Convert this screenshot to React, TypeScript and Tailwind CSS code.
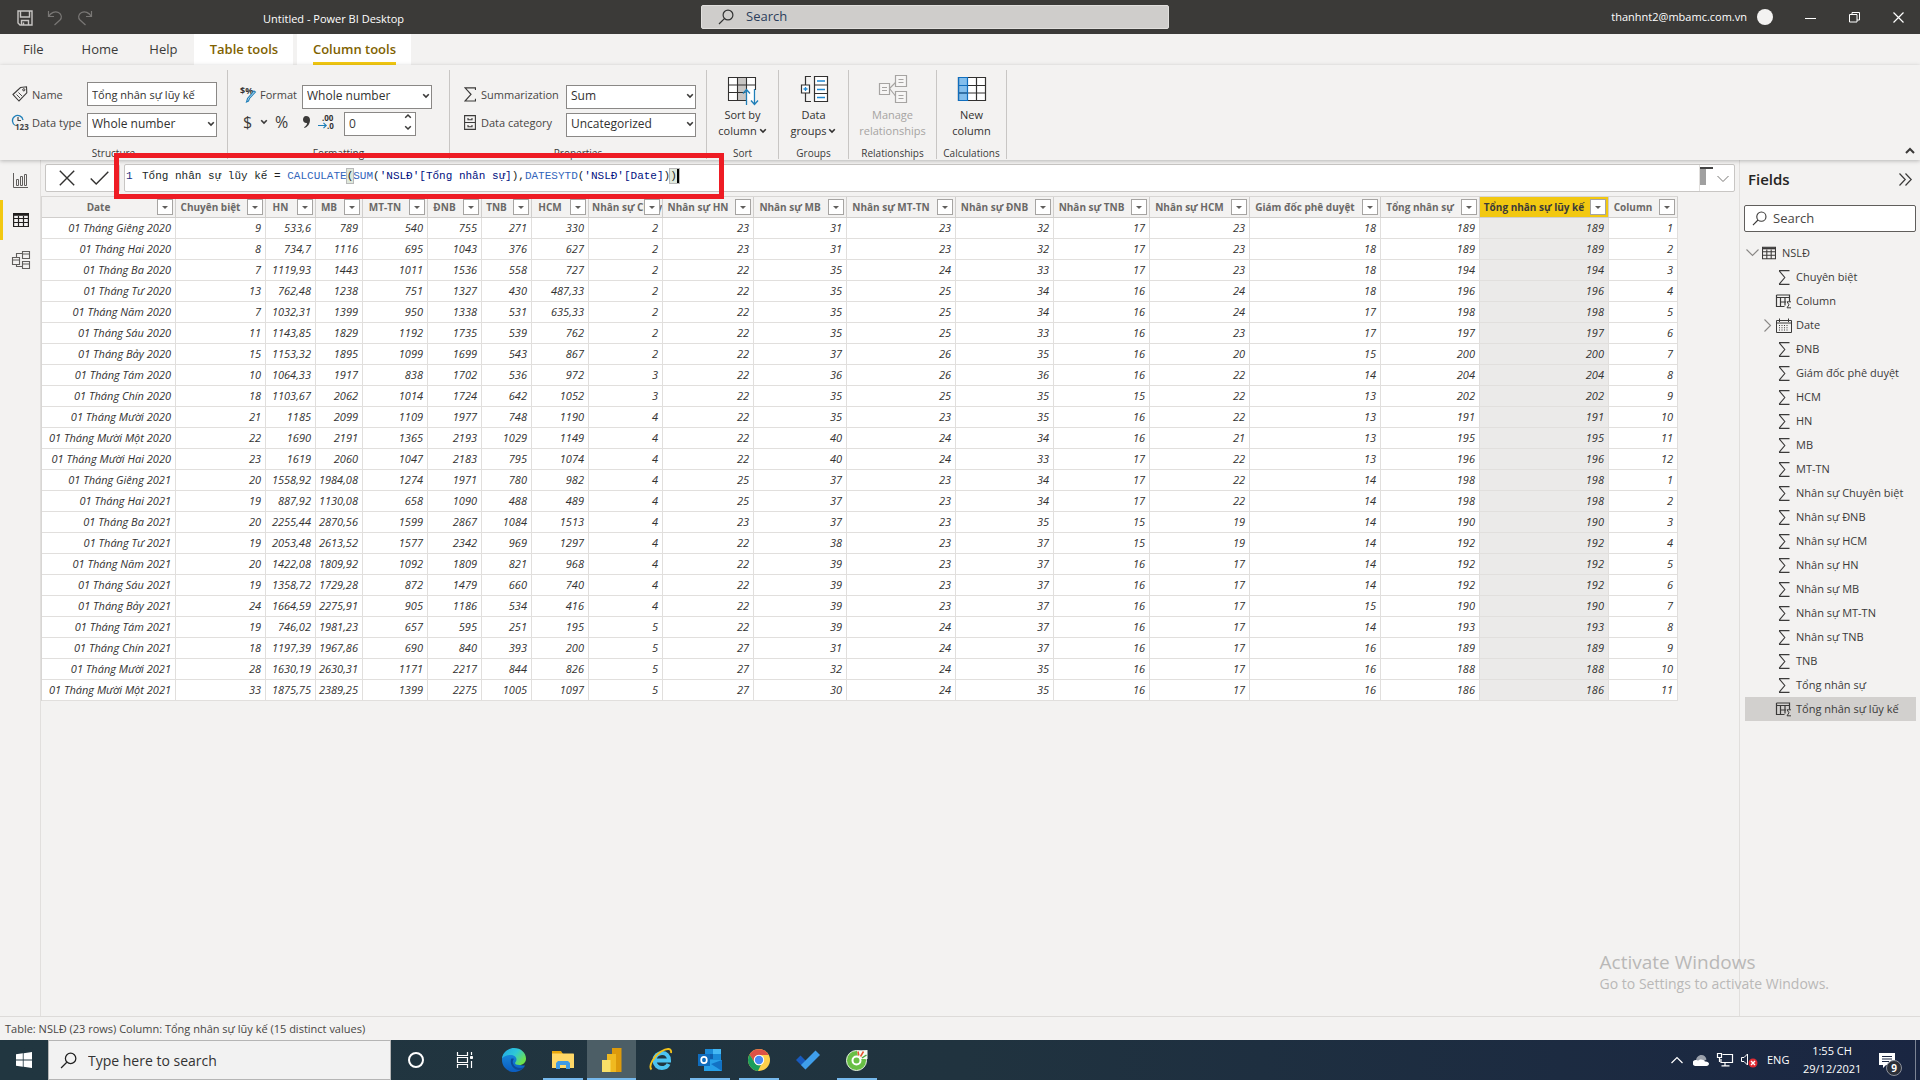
import type { ReactNode } from "react";

const UI = "font-['Open_Sans','Noto_Sans',sans-serif]";

/* ---------- data ---------- */

const columns: { name: string; width: string }[] = [
  { name: "Date", width: "w-[134px]" },
  { name: "Chuyên biệt", width: "w-[90px]" },
  { name: "HN", width: "w-[50px]" },
  { name: "MB", width: "w-[47px]" },
  { name: "MT-TN", width: "w-[65px]" },
  { name: "ĐNB", width: "w-[54px]" },
  { name: "TNB", width: "w-[50px]" },
  { name: "HCM", width: "w-[57px]" },
  { name: "Nhân sự Chuyên biệt", width: "w-[74px]" },
  { name: "Nhân sự HN", width: "w-[91px]" },
  { name: "Nhân sự MB", width: "w-[93px]" },
  { name: "Nhân sự MT-TN", width: "w-[109px]" },
  { name: "Nhân sự ĐNB", width: "w-[98px]" },
  { name: "Nhân sự TNB", width: "w-[96px]" },
  { name: "Nhân sự HCM", width: "w-[100px]" },
  { name: "Giám đốc phê duyệt", width: "w-[131px]" },
  { name: "Tổng nhân sự", width: "w-[99px]" },
  { name: "Tổng nhân sự lũy kế", width: "w-[129px]" },
  { name: "Column", width: "w-[69px]" },
];
const CLIPPED = 8;
const SELECTED = 17;

const rows: string[][] = [
  "01 Tháng Giêng 2020|9|533,6|789|540|755|271|330|2|23|31|23|32|17|23|18|189|189|1",
  "01 Tháng Hai 2020|8|734,7|1116|695|1043|376|627|2|23|31|23|32|17|23|18|189|189|2",
  "01 Tháng Ba 2020|7|1119,93|1443|1011|1536|558|727|2|22|35|24|33|17|23|18|194|194|3",
  "01 Tháng Tư 2020|13|762,48|1238|751|1327|430|487,33|2|22|35|25|34|16|24|18|196|196|4",
  "01 Tháng Năm 2020|7|1032,31|1399|950|1338|531|635,33|2|22|35|25|34|16|24|17|198|198|5",
  "01 Tháng Sáu 2020|11|1143,85|1829|1192|1735|539|762|2|22|35|25|33|16|23|17|197|197|6",
  "01 Tháng Bảy 2020|15|1153,32|1895|1099|1699|543|867|2|22|37|26|35|16|20|15|200|200|7",
  "01 Tháng Tám 2020|10|1064,33|1917|838|1702|536|972|3|22|36|26|36|16|22|14|204|204|8",
  "01 Tháng Chín 2020|18|1103,67|2062|1014|1724|642|1052|3|22|35|25|35|15|22|13|202|202|9",
  "01 Tháng Mười 2020|21|1185|2099|1109|1977|748|1190|4|22|35|23|35|16|22|13|191|191|10",
  "01 Tháng Mười Một 2020|22|1690|2191|1365|2193|1029|1149|4|22|40|24|34|16|21|13|195|195|11",
  "01 Tháng Mười Hai 2020|23|1619|2060|1047|2183|795|1074|4|22|40|24|33|17|22|13|196|196|12",
  "01 Tháng Giêng 2021|20|1558,92|1984,08|1274|1971|780|982|4|25|37|23|34|17|22|14|198|198|1",
  "01 Tháng Hai 2021|19|887,92|1130,08|658|1090|488|489|4|25|37|23|34|17|22|14|198|198|2",
  "01 Tháng Ba 2021|20|2255,44|2870,56|1599|2867|1084|1513|4|23|37|23|35|15|19|14|190|190|3",
  "01 Tháng Tư 2021|19|2053,48|2613,52|1577|2342|969|1297|4|22|38|23|37|15|19|14|192|192|4",
  "01 Tháng Năm 2021|20|1422,08|1809,92|1092|1809|821|968|4|22|39|23|37|16|17|14|192|192|5",
  "01 Tháng Sáu 2021|19|1358,72|1729,28|872|1479|660|740|4|22|39|23|37|16|17|14|192|192|6",
  "01 Tháng Bảy 2021|24|1664,59|2275,91|905|1186|534|416|4|22|39|23|37|16|17|15|190|190|7",
  "01 Tháng Tám 2021|19|746,02|1981,23|657|595|251|195|5|22|39|24|37|16|17|14|193|193|8",
  "01 Tháng Chín 2021|18|1197,39|1967,86|690|840|393|200|5|27|31|24|37|16|17|16|189|189|9",
  "01 Tháng Mười 2021|28|1630,19|2630,31|1171|2217|844|826|5|27|32|24|35|16|17|16|188|188|10",
  "01 Tháng Mười Một 2021|33|1875,75|2389,25|1399|2275|1005|1097|5|27|30|24|35|16|17|16|186|186|11",
].map((r) => r.split("|"));

type FieldKind = "sum" | "calc" | "date";
const fields: { name: string; kind: FieldKind }[] = [
  { name: "Chuyên biệt", kind: "sum" },
  { name: "Column", kind: "calc" },
  { name: "Date", kind: "date" },
  { name: "ĐNB", kind: "sum" },
  { name: "Giám đốc phê duyệt", kind: "sum" },
  { name: "HCM", kind: "sum" },
  { name: "HN", kind: "sum" },
  { name: "MB", kind: "sum" },
  { name: "MT-TN", kind: "sum" },
  { name: "Nhân sự Chuyên biệt", kind: "sum" },
  { name: "Nhân sự ĐNB", kind: "sum" },
  { name: "Nhân sự HCM", kind: "sum" },
  { name: "Nhân sự HN", kind: "sum" },
  { name: "Nhân sự MB", kind: "sum" },
  { name: "Nhân sự MT-TN", kind: "sum" },
  { name: "Nhân sự TNB", kind: "sum" },
  { name: "TNB", kind: "sum" },
  { name: "Tổng nhân sự", kind: "sum" },
  { name: "Tổng nhân sự lũy kế", kind: "calc" },
];

/* ---------- icons ---------- */

function Svg({ w, h, children, className = "" }: { w: number; h: number; children: ReactNode; className?: string }) {
  return (
    <svg
      width={w}
      height={h}
      viewBox={`0 0 ${w} ${h}`}
      fill="none"
      stroke="currentColor"
      className={`shrink-0 overflow-visible ${className}`}
      aria-hidden="true"
    >
      {children}
    </svg>
  );
}

const SmallChevron = ({ className = "" }: { className?: string }) => (
  <Svg w={8} h={6} className={className}>
    <path d="M1.2 1.2 4 4l2.8-2.8" strokeWidth="1.6" />
  </Svg>
);

const SearchIcon = ({ size = 16 }: { size?: number }) => (
  <svg width={size} height={size} viewBox="0 0 16 16" fill="none" stroke="currentColor" strokeWidth="1.2" className="shrink-0" aria-hidden="true">
    <circle cx="10" cy="6" r="4.9" />
    <path d="M6.4 9.6 1 15" />
  </svg>
);

const SaveIcon = () => (
  <Svg w={16} h={16}>
    <path d="M1 1h14v14H3l-2-2zM3.5 1v6h9V1M4.5 15v-4.5h7V15M6.5 12.500v2.500" strokeWidth="1.400" />
  </Svg>
);

const UndoIcon = () => (
  <Svg w={16} h={16}>
    <path d="M1.500 1v5.500H7M1.800 6.200C4 2.500 8 .8 11.500 2.500c3.500 2 3.500 5.500 1.500 7.500L7.500 15" strokeWidth="1.200" />
  </Svg>
);

const SigmaIcon = ({ w = 12, h = 15 }: { w?: number; h?: number }) => (
  <svg width={w} height={h} viewBox="0 0 12 15" fill="none" stroke="currentColor" strokeWidth="1.2" className="shrink-0" aria-hidden="true">
    <path d="M11.500 3V.8H1l6 6.500L1 14h10.500v-2.200" />
  </svg>
);

const ThinSigma = () => (
  <Svg w={12} h={15}>
    <path d="M1 .6h10.500M1 14.400h10.500M1.200.8l5.600 6.700-5.600 6.700" strokeWidth="1.100" />
  </Svg>
);

const TableIcon = ({ size = 16 }: { size?: number }) => (
  <svg width={size} height={size} viewBox="0 0 16 16" fill="none" stroke="currentColor" className="shrink-0" aria-hidden="true">
    <path d="M.6 1.500h14.800v13H.6zM.6 6.500h14.800M.6 10.500h14.800M5.500 4v10.500M10.500 4v10.500" strokeWidth="1.200" />
    <path d="M.6 2.700h14.800" strokeWidth="2.200" />
  </svg>
);

const CalcColumnIcon = () => (
  <Svg w={16} h={15}>
    <path d="M.5 1h13v6.500M.5 1v11.500h8M.5 3.500h13M4.500 3.500v9M9 3.500v8M4.500 8H10" strokeWidth="1.200" />
    <path d="M15 7.800h-4l2 3-2 3h4" strokeWidth="1" />
  </Svg>
);

const CalendarIcon = () => (
  <Svg w={16} h={15}>
    <path d="M.5 2.500h15v12H.5zM.5 5h15M3.500.5V4M12.500.5V4" strokeWidth="1" />
    <path d="M3 7.500h10M3 9.800h10M3 12h10" strokeWidth="1.100" strokeDasharray="1 1.500" />
  </Svg>
);

const TagIcon = () => (
  <Svg w={16} h={16}>
    <path d="M1 8.500 8.500 1.500 14.500.8l.3 6L7 15z" strokeWidth="1.100" />
    <circle cx="11.800" cy="3.800" r="1.100" />
    <path d="m4.500 8.500 3.500 3.500M6.500 6.500l3.500 3.500" strokeWidth=".9" />
  </Svg>
);

const DataTypeIcon = () => (
  <Svg w={18} h={17}>
    <path d="M3.500 11.500A5.300 5.300 0 1 1 11 6" stroke="#1f7fb8" strokeWidth="1.300" />
    <path d="M6 3v3.500h3" strokeWidth="1.100" />
    <text x="3" y="16" fontSize="8" fontWeight="700" fill="#444" stroke="none" fontFamily="Open Sans">
      123
    </text>
  </Svg>
);

const FormatIcon = () => (
  <Svg w={17} h={17}>
    <text x="0" y="8" fontSize="9" fontWeight="700" fill="#333" stroke="none" fontFamily="Open Sans">
      $%
    </text>
    <path d="m15.500 6-6 6.500-1 2.500-2 1 1-3.500L14 5z" stroke="#1f7fb8" strokeWidth="1.100" fill="#cfe6f5" />
  </Svg>
);

const DecimalIcon = () => (
  <Svg w={17} h={16}>
    <text x="4" y="7" fontSize="8" fontWeight="700" fill="#333" stroke="none" fontFamily="Open Sans">
      .00
    </text>
    <text x="9" y="15" fontSize="8" fontWeight="700" fill="#333" stroke="none" fontFamily="Open Sans">
      .0
    </text>
    <path d="M0 11.500h8M5.500 8.800l2.700 2.700-2.700 2.700" stroke="#1f7fb8" strokeWidth="1.200" />
  </Svg>
);

const CabinetIcon = () => (
  <Svg w={12} h={15}>
    <path d="M.6.600h10.800v13.800H.6zM.6 7.500h10.800M4 3v1.800h4V3M4 10v1.800h4V10" strokeWidth="1.100" />
  </Svg>
);

const SortIcon = () => (
  <Svg w={32} h={32}>
    <path d="M1.500 4.500h27v23h-27z" fill="#fff" stroke="none" />
    <path d="M10.500 4.500h9v23h-9z" fill="#c8c6c4" stroke="none" />
    <path d="M19 27.500H1.500v-23h27V17M1.500 12h27M1.500 19.500h17M10.500 4.500v23M19.500 4.500V16" strokeWidth="1.100" />
    <path d="M19.500 32V17M16 20.500l3.500-4 3.500 4M27.500 16v15M24 27.500l3.500 4 3.500-4" stroke="#1f7fb8" strokeWidth="1.300" />
  </Svg>
);

const GroupsIcon = () => (
  <Svg w={30} h={30}>
    <path d="M15.500 2.500h13v25h-13z" fill="#fff" strokeWidth="1.200" />
    <path d="M15.500 11h13M15.500 19.500h13M12 2.500H6.500V11M6.500 19v8.500H12" strokeWidth="1.200" />
    <path d="M18 7h8M18 15.500h8M18 23.500h8" stroke="#1e88d2" strokeWidth="1.300" />
    <path d="M2.500 11h8v8h-8z" fill="#fff" strokeWidth="1.200" />
    <path d="M4.500 15h4M6.500 13v4" stroke="#1e88d2" strokeWidth="1.300" />
  </Svg>
);

const RelationsIcon = () => (
  <Svg w={30} h={30}>
    <path d="M11.500 14.500l6-6M11.500 14.500l6 7.500" strokeWidth="1.200" />
    <path d="M1.500 9.500h10v11h-10zM17.500 1.500h11v11h-11zM17.500 17.500h11v11h-11z" fill="#f7f6f5" strokeWidth="1.200" />
    <path d="M4 13.500h5M4 16.500h5M20.500 5.500h5M20.500 8.500h5M20.500 21.500h5M20.500 24.500h5" strokeWidth="1" />
  </Svg>
);

const NewColumnIcon = () => (
  <Svg w={30} h={28}>
    <path d="M1.500 2.500h27v23h-27z" fill="#fff" stroke="none" />
    <path d="M1.500 2.500h9v23h-9z" fill="#83beec" stroke="none" />
    <path d="M1.500 2.500h27v23h-27zM1.500 10.500h27M1.500 18h27M19.500 2.500v23" strokeWidth="1.200" />
    <path d="M10.500 2.500v23h-9v-23zM1.500 10.500h9M1.500 18h9" stroke="#106ebe" strokeWidth="1.200" />
  </Svg>
);

/* ---------- shell ---------- */

function TitleBar() {
  return (
    <header className="grid h-[34px] grid-cols-[701fr_468fr_751fr] items-center bg-[#3b3a38] text-[12px] text-white">
      <div className="flex items-center">
        <div className="flex items-center gap-[14px] pt-[2px] pl-[17px]">
          <button aria-label="Save" className="text-[#c8c6c4]"><SaveIcon /></button>
          <button aria-label="Undo" className="text-[#797775]"><UndoIcon /></button>
          <button aria-label="Redo" className="-scale-x-100 text-[#797775]"><UndoIcon /></button>
        </div>
        <h1 className="pt-1 pl-[170px] text-[11px]">Untitled - Power BI Desktop</h1>
      </div>
      <label className="flex h-6 items-center gap-3 rounded-[2px] border border-[#e1dfdd] bg-[#cfcdcb] px-4 text-[#333]">
        <SearchIcon />
        <input aria-label="Search" placeholder="Search" className="min-w-0 flex-1 bg-transparent text-[13px] outline-none placeholder:text-[#2c3e5c]" />
      </label>
      <div className="flex items-center justify-end">
        <span className="pt-px text-[11px]">thanhnt2@mbamc.com.vn</span>
        <span className="mr-[15px] ml-[10px] size-4 rounded-full bg-[#f3f2f1]" />
        <button aria-label="Minimize" className="flex w-11 justify-center"><Svg w={11} h={11}><path d="M0 6.500h11" /></Svg></button>
        <button aria-label="Restore" className="flex w-11 justify-center"><Svg w={11} h={11}><path d="M.5 2.500h7.500v7.500H.5zM3 2.500V.5h7.500V8H8" /></Svg></button>
        <button aria-label="Close" className="flex w-11 justify-center"><Svg w={11} h={11}><path d="m.5.500 10 10M10.500.5l-10 10" strokeWidth="1.200" /></Svg></button>
      </div>
    </header>
  );
}

function Tabs() {
  return (
    <nav className="flex h-[31px] text-[13px] text-[#3b3a39]">
      <button className="pt-px pr-[18px] pl-[23px]">File</button>
      <button className="px-5 pt-px">Home</button>
      <button className="px-[11px] pt-px">Help</button>
      <button className="ml-[6px] w-[99px] bg-white pt-px font-semibold text-[#806200]">Table tools</button>
      <button className="ml-1 flex w-[114px] justify-center bg-white font-semibold text-[#806200]">
        <span className="flex h-full items-center border-b-[3px] border-[#f2c811] pt-1">Column tools</span>
      </button>
    </nav>
  );
}

function Select({ label, value, width }: { label: string; value: string; width: string }) {
  return (
    <span className={`relative block h-6 ${width}`}>
      <select id={label} defaultValue={value} className="h-6 w-full appearance-none border border-[#8a8886] bg-white pr-4 pb-[2px] pl-1 text-[12px] leading-5 text-[#323130]">
        <option>{value}</option>
      </select>
      <SmallChevron className="pointer-events-none absolute top-[11px] right-[2px]" />
    </span>
  );
}

function Group({ title, width, children }: { title: string; width: string; children: ReactNode }) {
  return (
    <section className={`flex h-[89px] shrink-0 flex-col justify-between border-r border-[#c8c6c4] ${width}`}>
      {children}
      <h2 className="text-center text-[10px] leading-[12px] text-[#3b3a39]">{title}</h2>
    </section>
  );
}

function BigButton({ icon, lines, menu, disabled }: { icon: ReactNode; lines: [string, string]; menu?: boolean; disabled?: boolean }) {
  return (
    <button disabled={disabled} className={`flex flex-col items-center text-[11px] leading-4 ${disabled ? "text-[#a6a4a2]" : "text-[#323130]"}`}>
      <span className="flex h-[37px] items-center">{icon}</span>
      <span>{lines[0]}</span>
      <span className="flex items-center gap-[2px]">
        {lines[1]}
        {menu && <SmallChevron />}
      </span>
    </button>
  );
}

const labelClass = "pt-[2px] whitespace-nowrap text-[11px] text-[#484644]";

function Ribbon() {
  return (
    <div className="relative z-10 flex h-[95px] items-start bg-[#f3f2f1] pt-[5px] text-[#3b3a39] shadow-[0_1px_4px_rgba(0,0,0,0.25)]">
      <Group title="Structure" width="w-[228px]">
        <div className="grid grid-cols-[20px_55px_130px] items-center gap-y-1 pt-3 pl-3">
          <TagIcon />
          <label htmlFor="name" className={labelClass}>Name</label>
          <input id="name" defaultValue="Tổng nhân sự lũy kế" className="h-6 border border-[#8a8886] bg-white px-1 text-[11px] text-[#323130]" />
          <DataTypeIcon />
          <label htmlFor="Data type" className={labelClass}>Data type</label>
          <Select label="Data type" value="Whole number" width="w-[130px]" />
        </div>
      </Group>
      <Group title="Formatting" width="w-[222px]">
        <div className="flex flex-col gap-1 pt-3 pl-3">
          <div className="grid grid-cols-[20px_42px_130px] items-center">
            <FormatIcon />
            <label htmlFor="Format" className={labelClass}>Format</label>
            <Select label="Format" value="Whole number" width="w-[130px]" />
          </div>
          <div className="flex h-6 items-center">
            <button aria-label="Currency" className="flex w-[35px] items-center gap-2 pl-[3px] text-[16px] leading-6">
              $<SmallChevron />
            </button>
            <button aria-label="Percentage" className="w-[27px] text-left text-[16px] leading-6">%</button>
            <button aria-label="Thousands separator" className="w-4">
              <Svg w={9} h={14}><path d="M4 1C6.500 1 8 2.600 8 5c0 4-2.500 7-5.500 8l-.4-.8C4 11 5 9.600 5 8 2.500 8.300 1 6.800 1 4.600 1 2.500 2.300 1 4 1z" fill="currentColor" stroke="none" /></Svg>
            </button>
            <button aria-label="Decimal places"><DecimalIcon /></button>
            <span className="relative ml-[9px] block h-6 w-[72px]">
              <input aria-label="Decimals" defaultValue="0" className="h-6 w-full border border-[#8a8886] bg-white px-1 text-[12px]" />
              <Svg w={8} h={18} className="pointer-events-none absolute top-[3px] right-1"><path d="M1.200 4.800 4 2l2.800 2.800M1.200 13.200 4 16l2.800-2.800" strokeWidth="1.500" /></Svg>
            </span>
          </div>
        </div>
      </Group>
      <Group title="Properties" width="w-[257px]">
        <div className="grid grid-cols-[17px_85px_130px] items-center gap-y-1 pt-3 pl-[14px]">
          <SigmaIcon />
          <label htmlFor="Summarization" className={labelClass}>Summarization</label>
          <Select label="Summarization" value="Sum" width="w-[130px]" />
          <CabinetIcon />
          <label htmlFor="Data category" className={labelClass}>Data category</label>
          <Select label="Data category" value="Uncategorized" width="w-[130px]" />
        </div>
      </Group>
      <Group title="Sort" width="w-[72px]">
        <BigButton icon={<SortIcon />} lines={["Sort by", "column"]} menu />
      </Group>
      <Group title="Groups" width="w-[70px]">
        <BigButton icon={<GroupsIcon />} lines={["Data", "groups"]} menu />
      </Group>
      <Group title="Relationships" width="w-[88px]">
        <BigButton icon={<RelationsIcon />} lines={["Manage", "relationships"]} disabled />
      </Group>
      <Group title="Calculations" width="w-[70px]">
        <BigButton icon={<NewColumnIcon />} lines={["New", "column"]} />
      </Group>
      <button aria-label="Collapse ribbon" className="mr-[5px] mb-[6px] ml-auto self-end">
        <Svg w={10} h={7}><path d="m1 6 4-4 4 4" strokeWidth="2" /></Svg>
      </button>
    </div>
  );
}

function Rail() {
  return (
    <nav className="flex w-[41px] shrink-0 flex-col border-r border-[#e1dfdd] text-[#605e5c]">
      <button aria-label="Report" className="flex h-10 items-center justify-center border-l-[3px] border-transparent pr-[2px]">
        <Svg w={15} h={15}><path d="M.5 0v14.500H15M3.500 6.500h2v6h-2zM7.500 3.500h2v9h-2zM11.500 1.500h2v11h-2z" /></Svg>
      </button>
      <button aria-label="Data" className="flex h-10 items-center justify-center border-l-[3px] border-[#f2c811] pr-[2px] text-[#201f1e]">
        <TableIcon />
      </button>
      <button aria-label="Model" className="flex h-10 items-center justify-center border-l-[3px] border-transparent pr-[2px]">
        <Svg w={18} h={18}><path d="M.5 6.500h7v7h-7zM.5 9h7M10.500.5h7v7h-7zM10.500 3h7M10.500 10.500h7v7h-7zM10.500 13h7M4.500 6.500v-4h6M4.500 13.500v2h6" strokeWidth="1.100" /></Svg>
      </button>
    </nav>
  );
}

function FormulaBar() {
  return (
    <div className="relative flex h-9 items-center gap-1 pr-1 pl-1">
      <div className="flex h-7 w-[75px] items-center justify-between rounded-[2px] border border-[#c8c6c4] bg-white pr-[10px] pl-[13px] text-[#323130]">
        <button aria-label="Cancel"><Svg w={16} h={16}><path d="m.8.800 14.400 14.400M15.200.8.800 15.200" strokeWidth="1.400" /></Svg></button>
        <button aria-label="Commit"><Svg w={19} h={14}><path d="m.7 7.500 5.500 5.500L18.300.8" strokeWidth="1.400" /></Svg></button>
      </div>
      <div className="flex h-7 flex-1 items-center rounded-[2px] border border-[#c8c6c4] bg-white font-['Liberation_Mono',monospace] text-[11px] leading-4">
        <span className="w-[17px] pb-1 pl-px text-[#1b2f80]">1</span>
        <code className="flex-1 pb-1 font-['Liberation_Mono',monospace] whitespace-pre text-[#201f1e]">
          Tổng nhân sự lũy kế = <span className="text-[#3165bb]">CALCULATE</span>
          <span className="bg-[#dfe8dc] py-px outline outline-[#b9b9b9]">(</span>
          <span className="text-[#3165bb]">SUM</span>(<span className="text-[#001080]">'NSLĐ'[Tổng nhân sự]</span>),
          <span className="text-[#3165bb]">DATESYTD</span>(<span className="text-[#001080]">'NSLĐ'[Date]</span>)
          <span className="border-r-2 border-black bg-[#dfe8dc] py-px outline outline-[#b9b9b9]">)</span>
        </code>
        <div className="flex h-full gap-1 border-l border-[#e1dfdd] pt-[2px]">
          <div className="w-[13px]">
            <div className="h-[2px] bg-[#444]" />
            <div className="h-4 w-[6px] bg-[#a0a0a0]" />
          </div>
          <button aria-label="Expand formula bar" className="mr-[5px] text-[#797775]"><Svg w={12} h={8}><path d="m.5 1 5.500 5.500L11.500 1" /></Svg></button>
        </div>
      </div>
      <div className="pointer-events-none absolute -top-[7px] left-[73px] z-20 h-[46px] w-[610px] border-[5px] border-[#ee1c24]" />
    </div>
  );
}

function DataGrid() {
  return (
    <table className="w-[1637px] table-fixed border-separate border-spacing-0 border-t border-l border-[#d8d6d4] text-[11px]">
      <colgroup>
        {columns.map((c) => (
          <col key={c.name} className={c.width} />
        ))}
      </colgroup>
      <thead>
        <tr>
          {columns.map((c, i) => (
            <th
              key={c.name}
              className={`relative h-[21px] border-r border-b border-[#d0cecc] p-0 ${
                i === SELECTED ? "bg-[#f2c811] text-[#3b3a39]" : "bg-[#f3f2f1] text-[#6b6967]"
              }`}
            >
              <span className={`block overflow-hidden text-[10px] leading-5 font-bold whitespace-nowrap ${i === CLIPPED ? "pl-[3px] text-left" : "pr-[21px] pl-px text-center"}`}>
                {c.name}
              </span>
              <button aria-label={`Filter ${c.name}`} className="absolute top-[2px] right-[2px] flex size-4 items-center justify-center border border-[#a6a4a2] bg-white text-[#605e5c]">
                <Svg w={6} h={3}><path d="M0 0h6L3 3z" fill="currentColor" stroke="none" /></Svg>
              </button>
            </th>
          ))}
        </tr>
      </thead>
      <tbody>
        {rows.map((r) => (
          <tr key={r[0]}>
            {r.map((v, i) => (
              <td
                key={i}
                className={`h-[21px] overflow-hidden border-r border-b border-[#e1dfdd] p-0 pr-1 text-right leading-5 whitespace-nowrap text-[#323130] italic ${
                  i === SELECTED ? "bg-[#ebeae9]" : "bg-white"
                }`}
              >
                {v}
              </td>
            ))}
          </tr>
        ))}
      </tbody>
    </table>
  );
}

function FieldsPane() {
  return (
    <aside className="w-[181px] shrink-0 border-l border-[#e1dfdd] text-[#3b3a39]">
      <div className="flex h-[45px] items-center justify-between pr-2 pb-[7px] pl-2">
        <h2 className="text-[15px] font-semibold text-[#252423]">Fields</h2>
        <button aria-label="Collapse pane"><Svg w={13} h={13}><path d="m.5.500 5.700 6-5.700 6M6.500.5l5.700 6-5.700 6" strokeWidth="1.200" /></Svg></button>
      </div>
      <label className="mr-1 ml-1 flex h-[27px] items-center gap-[6px] rounded-[2px] border border-[#605e5c] bg-white pl-[7px]">
        <SearchIcon size={15} />
        <input aria-label="Search fields" placeholder="Search" className="min-w-0 flex-1 bg-transparent pt-px text-[13px] outline-none placeholder:text-[#484644]" />
      </label>
      <ul className="mt-[9px] mr-1 ml-[5px] text-[11px]">
        <li className="flex h-6 items-center">
          <Svg w={13} h={8} className="ml-px text-[#8a8886]"><path d="m.5.500 6 6 6-6" strokeWidth="1.100" /></Svg>
          <span className="mr-[6px] ml-[3px]"><TableIcon size={14} /></span>
          <span className="pt-px">NSLĐ</span>
        </li>
        {fields.map((f, i) => (
          <li key={f.name} className={`flex h-6 items-center whitespace-nowrap ${i === fields.length - 1 ? "bg-[#d2d0ce]" : ""}`}>
            <span className="flex w-[31px] justify-center text-[#8a8886]">
              {f.kind === "date" && <Svg w={8} h={13} className="ml-[14px]"><path d="m.5.500 6 6-6 6" strokeWidth="1.100" /></Svg>}
            </span>
            <span className="flex w-5 justify-start">
              {f.kind === "sum" ? <span className="pl-[2px]"><ThinSigma /></span> : f.kind === "calc" ? <CalcColumnIcon /> : <CalendarIcon />}
            </span>
            <span className="pt-px">{f.name}</span>
          </li>
        ))}
      </ul>
    </aside>
  );
}

/* ---------- taskbar ---------- */

const EdgeIcon = () => (
  <svg width="24" height="24" viewBox="0 0 24 24" aria-hidden="true">
    <defs>
      <linearGradient id="edgeTop" x1="0" y1="0" x2="1" y2=".6">
        <stop offset="0" stopColor="#1fa4e8" />
        <stop offset=".55" stopColor="#2fc8d6" />
        <stop offset="1" stopColor="#6ee24a" />
      </linearGradient>
      <linearGradient id="edgeLow" x1="0" y1="0" x2="0" y2="1">
        <stop offset="0" stopColor="#1b90e0" />
        <stop offset="1" stopColor="#0b5cbf" />
      </linearGradient>
    </defs>
    <path d="M0 12C0 5 5 2 12 2c4 0 6 6 3 10 0 4 3 6 8 5.500C21 21.500 17 24 12 24 5.400 24 0 18.600 0 12z" fill="url(#edgeLow)" />
    <path d="M0 10.500C.7 4.500 5.800 0 12 0c7 0 12 5 12 10.500 0 4-3 6.500-6.500 6.500-3 0-4.500-1-4.500-2 0-.8 1.500-1.500 1.500-3.500 0-2.500-2.500-4.500-6-4.500C5 7 2 8 0 10.500z" fill="url(#edgeTop)" />
    <path d="M9 11c-1.500 6 3 11 8 11 2 0 4-1 5.500-3-4 2-10 1-11.500-3.500C10.300 13.500 11 12 12 11c-1-.6-2-.6-3 0z" fill="#0c4a9a" />
  </svg>
);

const ExplorerIcon = () => (
  <svg width="22" height="20" viewBox="0 0 22 20" aria-hidden="true">
    <path d="M0 1h9l2 3H0z" fill="#e8a70d" />
    <path d="M0 3.500h21c.6 0 1 .4 1 1V18H0z" fill="#ffd867" />
    <path d="M4 19v-6l2-2h10l2 2v6h-4v-4H8v4z" fill="#3e9be6" />
  </svg>
);

const PowerBiIcon = () => (
  <svg width="20" height="24" viewBox="0 0 20 24" aria-hidden="true">
    <path d="M10 0h9.500v24H10z" fill="#dd9a0c" />
    <path d="M5 6h9v18H5z" fill="#f0b920" />
    <path d="M0 12h8.500v12H0z" fill="#f9e068" />
  </svg>
);

const IeIcon = () => (
  <svg width="24" height="24" viewBox="0 0 24 24" fill="none" aria-hidden="true">
    <path d="M6 12.500h14C20 7.500 17 5 13 5s-7.500 3-7.500 7.500S9 20 13 20c3 0 5.300-1.300 6.500-4" stroke="#4cc3f1" strokeWidth="4" />
    <path d="M2.500 21.500C-1 18 5 8 12 3.500 18 0 23 0 22 5" stroke="#f3c21b" strokeWidth="1.900" />
  </svg>
);

const OutlookIcon = () => (
  <svg width="24" height="22" viewBox="0 0 24 22" aria-hidden="true">
    <path d="M7 0h16v13H7z" fill="#1a8ad8" />
    <path d="M15 0h8v5h-8z" fill="#45b8f4" />
    <path d="M7 5h8v5H7z" fill="#0f5fae" />
    <path d="M6 11h18v11H6z" fill="#27a0e8" />
    <path d="M24 11v11L13 15z" fill="#1272c4" />
    <path d="M0 5h12v12H0z" fill="#0f6cbd" />
    <ellipse cx="6" cy="11" rx="2.800" ry="3.200" fill="none" stroke="#fff" strokeWidth="1.700" />
  </svg>
);

const ChromeIcon = () => (
  <svg width="22" height="22" viewBox="0 0 22 22" aria-hidden="true">
    <circle cx="11" cy="11" r="11" fill="#ffd04b" />
    <path d="M1.500 5.500A11 11 0 0 1 20.600 6H11a5 5 0 0 0-4.600 7z" fill="#de5246" />
    <path d="M1.500 5.500 6.700 13.500A5 5 0 0 0 13 15.700L10 22A11 11 0 0 1 1.500 5.500z" fill="#1a9e5b" />
    <circle cx="11" cy="11" r="5.200" fill="#fff" />
    <circle cx="11" cy="11" r="4.200" fill="#4a8af4" />
  </svg>
);

const TodoIcon = () => (
  <svg width="24" height="20" viewBox="0 0 24 20" aria-hidden="true">
    <path d="m0 10 4.500-4.500L12 13l-2.500 6.500z" fill="#185abd" />
    <path d="M5 15 19.500.5 24 5 9.500 19.500z" fill="#3f9eea" />
  </svg>
);

const CocCocIcon = () => (
  <svg width="22" height="22" viewBox="0 0 22 22" aria-hidden="true">
    <circle cx="10.500" cy="11.500" r="10" fill="#69bf45" stroke="#e9f5e4" />
    <circle cx="10.500" cy="11.500" r="4" fill="none" stroke="#fff" strokeWidth="2" />
    <path d="M12 8 11 1.500 21.500 1v9L15 10z" fill="#f4faf2" />
    <path d="m12.800 6.500-.8-4M14.500 7.500l3-5" stroke="#e8532f" strokeWidth="1.500" />
    <path d="m16 9 4.500-3" stroke="#4da53b" strokeWidth="1.500" />
  </svg>
);

function TaskButton({ label, children, open, active }: { label: string; children: ReactNode; open?: boolean; active?: boolean }) {
  return (
    <button
      aria-label={label}
      className={`flex h-10 w-[49px] flex-col items-center ${active ? "bg-[#4c5e66]" : ""}`}
    >
      <span className="flex flex-1 items-center">{children}</span>
      <span className={`-mt-[2px] h-[2px] ${active ? "w-full" : "w-10"} ${open ? "bg-[#76b9ed]" : ""}`} />
    </button>
  );
}

function Taskbar() {
  return (
    <footer className="flex h-10 items-center bg-linear-to-r from-[#213640] via-[#20333f] to-[#1a2642] text-white">
      <button aria-label="Start" className="flex w-12 justify-center">
        <svg width="16" height="16" viewBox="0 0 16 16" fill="#fff" aria-hidden="true"><path d="M0 2.200 6.800 1.300v6.300H0zM7.600 1.200 16 0v7.600H7.600zM0 8.400h6.800v6.300L0 13.800zM7.600 8.400H16V16l-8.400-1.200z" /></svg>
      </button>
      <label className="flex h-10 w-[343px] items-center gap-[11px] border border-[#b5b5b5] bg-[#f2f2f2] pl-[11px] text-[#222]">
        <SearchIcon size={17} />
        <input aria-label="Type here to search" placeholder="Type here to search" className="min-w-0 flex-1 bg-transparent text-[14px] outline-none placeholder:text-[#333]" />
      </label>
      <div className="flex">
        <TaskButton label="Cortana"><Svg w={18} h={18}><circle cx="9" cy="9" r="7" strokeWidth="2" /></Svg></TaskButton>
        <TaskButton label="Task view"><Svg w={16} h={16}><path d="M.5 0v3.500h10V0M.5 16v-3.500h10V16M.5 5.500h10v5H.5zM14.500 0v3M14.500 9v7" strokeWidth="1.200" /><path d="M13.500 4.500h2v2h-2z" fill="currentColor" /></Svg></TaskButton>
        <TaskButton label="Edge"><EdgeIcon /></TaskButton>
        <TaskButton label="File Explorer" open><ExplorerIcon /></TaskButton>
        <TaskButton label="Power BI Desktop" open active><PowerBiIcon /></TaskButton>
        <TaskButton label="Internet Explorer"><IeIcon /></TaskButton>
        <TaskButton label="Outlook" open><OutlookIcon /></TaskButton>
        <TaskButton label="Chrome" open><ChromeIcon /></TaskButton>
        <TaskButton label="To Do"><TodoIcon /></TaskButton>
        <TaskButton label="Coc Coc" open><CocCocIcon /></TaskButton>
      </div>
      <div className="ml-auto flex h-full items-center text-[11px] leading-[18px]">
        <button aria-label="Show hidden icons" className="flex w-6 justify-center"><Svg w={12} h={8}><path d="m.5 7 5.500-5.500L11.500 7" strokeWidth="1.200" /></Svg></button>
        <button aria-label="OneDrive" className="flex w-6 justify-center">
          <svg width="16" height="11" viewBox="0 0 16 11" aria-hidden="true"><path d="M3 6C3 2.500 5.500 0 8.500 0 11 0 13 2 13.500 4.500L6 9z" fill="#9aa0ab" /><path d="M3 11a3 3 0 0 1-.5-6c1-.2 2 .2 2.500.8C7.500 3.500 11 5 12 6.500c2-.3 4 .7 4 2.300C16 10 15 11 13.500 11z" fill="#fff" /></svg>
        </button>
        <button aria-label="Network" className="flex w-6 justify-center"><Svg w={16} h={14}><path d="M5.500 1.500h10v8H4V6M.5.500h4v4h-4zM2.500 4.500V9M8 9.500v3M4.500 12.900h8" strokeWidth="1.200" /></Svg></button>
        <button aria-label="Volume muted" className="flex w-6 justify-center">
          <Svg w={17} h={15}><path d="M.5 4.500h2.500L6.500 1v11L3 8.500H.5z" /><circle cx="12" cy="10" r="4.500" fill="#e02b33" stroke="none" /><path d="m10 8 4 4M14 8l-4 4" strokeWidth="1.400" /></Svg>
        </button>
        <span className="ml-[6px] w-9">ENG</span>
        <time className="w-[58px] text-center whitespace-nowrap">1:55 CH<br />29/12/2021</time>
        <button aria-label="Notifications" className="relative ml-[18px] w-[24px]">
          <Svg w={16} h={15}><path d="M0 0h16v12H7l-3 3v-3H0z" fill="#fff" stroke="none" /><path d="M3 3.500h10M3 6h10M3 8.500h7" stroke="#1b2742" /></Svg>
          <span className="absolute top-[7px] left-[7px] flex size-4 items-center justify-center rounded-full border border-[#8c919c] bg-[#2b2f38] text-[10px] font-bold">9</span>
        </button>
        <span className="ml-[12px] h-full w-[5px] border-l border-[#7c8494]" />
      </div>
    </footer>
  );
}

export default function App() {
  return (
    <div className={`relative flex min-h-screen flex-col bg-[#f3f2f1] ${UI}`}>
      <TitleBar />
      <Tabs />
      <Ribbon />
      <div className="flex flex-1">
        <Rail />
        <main className="min-w-0 flex-1">
          <FormulaBar />
          <DataGrid />
        </main>
        <FieldsPane />
      </div>
      <p className="flex h-6 items-center border-t border-[#dddbd9] pt-px pl-[5px] text-[11px] text-[#484644]">
        Table: NSLĐ (23 rows) Column: Tổng nhân sự lũy kế (15 distinct values)
      </p>
      <Taskbar />
      <div className="pointer-events-none absolute right-[91px] bottom-[88px] text-[#b9b8b7]">
        <p className="text-[19px] leading-7">Activate Windows</p>
        <p className="text-[14px] leading-4">Go to Settings to activate Windows.</p>
      </div>
    </div>
  );
}
